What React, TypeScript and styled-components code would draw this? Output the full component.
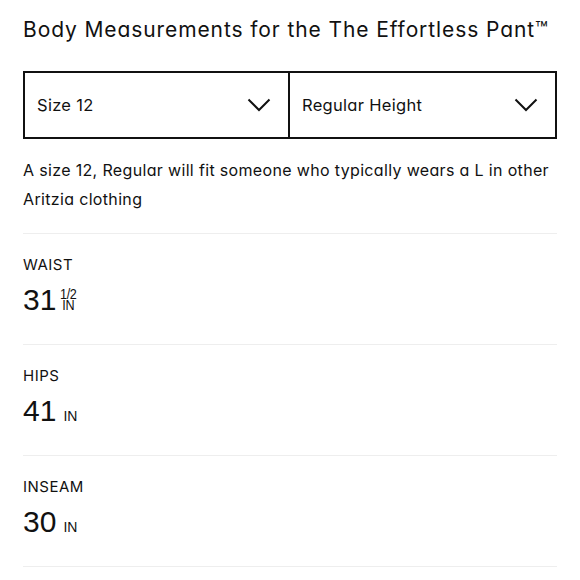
import React from "react";
import styled, { createGlobalStyle } from "styled-components";

const Global = createGlobalStyle`
  html, body { margin: 0; padding: 0; background: #fff; }
  body { font-family: Inter, "Noto Sans", sans-serif; color: #111; font-feature-settings: "cv11"; }
`;

const Page = styled.div`
  padding: 16px 23px 0 23px;
  width: 534px;
`;

const Title = styled.h1`
  margin: 0;
  font-size: 21px;
  font-weight: 400;
  line-height: 28px;
  letter-spacing: 0.9px;
`;

const SelectRow = styled.div`
  margin-top: 27px;
  display: grid;
  grid-template-columns: 1fr 1fr;
  border: 2px solid #111;
  height: 68px;
  box-sizing: border-box;
`;

const Select = styled.div<{ $first?: boolean }>`
  display: flex;
  align-items: center;
  justify-content: space-between;
  padding: 0 17px 0 12px;
  font-size: 16.5px;
  letter-spacing: 0.3px;
  ${(p) => (p.$first ? "border-right: 2px solid #111;" : "")}
`;

const Chevron = () => (
  <svg width="24" height="14" viewBox="0 0 24 14" fill="none">
    <path d="M1.5 1.5 L12 12 L22.5 1.5" stroke="#111" strokeWidth="2" />
  </svg>
);

const Intro = styled.p`
  margin: 17px 0 0 0;
  font-size: 16px;
  line-height: 29px;
  letter-spacing: 0.34px;
  padding-bottom: 19px;
  border-bottom: 1px solid #eee;
`;

const Measure = styled.div`
  height: 111px;
  border-bottom: 1px solid #eee;
  padding-top: 22px;
  box-sizing: border-box;
`;

const Label = styled.div`
  font-size: 15px;
  line-height: 18px;
  letter-spacing: 0.5px;
`;

const ValueRow = styled.div`
  display: flex;
  align-items: baseline;
  margin-top: 10px;
  font-family: "Liberation Sans", Arial, sans-serif;
`;

const Big = styled.span`
  font-size: 30px;
  line-height: 32px;
`;

const UnitStack = styled.span`
  align-self: flex-start;
  display: flex;
  flex-direction: column;
  align-items: center;
  margin: 4.5px 0 0 4px;
  font-size: 14px;
  line-height: 11px;
  letter-spacing: -0.4px;
  transform: scaleX(0.9);
  transform-origin: left center;
`;

const Unit = styled.span`
  font-size: 14px;
  margin-left: 7px;
`;

const items = [
  { label: "WAIST", value: "31", frac: "1/2" },
  { label: "HIPS", value: "41" },
  { label: "INSEAM", value: "30" },
];

export default function App() {
  return (
    <>
      <Global />
      <Page>
        <Title>Body Measurements for the The Effortless Pant™</Title>
        <SelectRow>
          <Select $first>
            <span>Size 12</span>
            <Chevron />
          </Select>
          <Select>
            <span>Regular Height</span>
            <Chevron />
          </Select>
        </SelectRow>
        <Intro>
          A size 12, Regular will fit someone who typically wears a L in other Aritzia clothing
        </Intro>
        {items.map((it) => (
          <Measure key={it.label}>
            <Label>{it.label}</Label>
            <ValueRow>
              <Big>{it.value}</Big>
              {it.frac ? (
                <UnitStack>
                  <span>{it.frac}</span>
                  <span>IN</span>
                </UnitStack>
              ) : (
                <Unit>IN</Unit>
              )}
            </ValueRow>
          </Measure>
        ))}
      </Page>
    </>
  );
}
